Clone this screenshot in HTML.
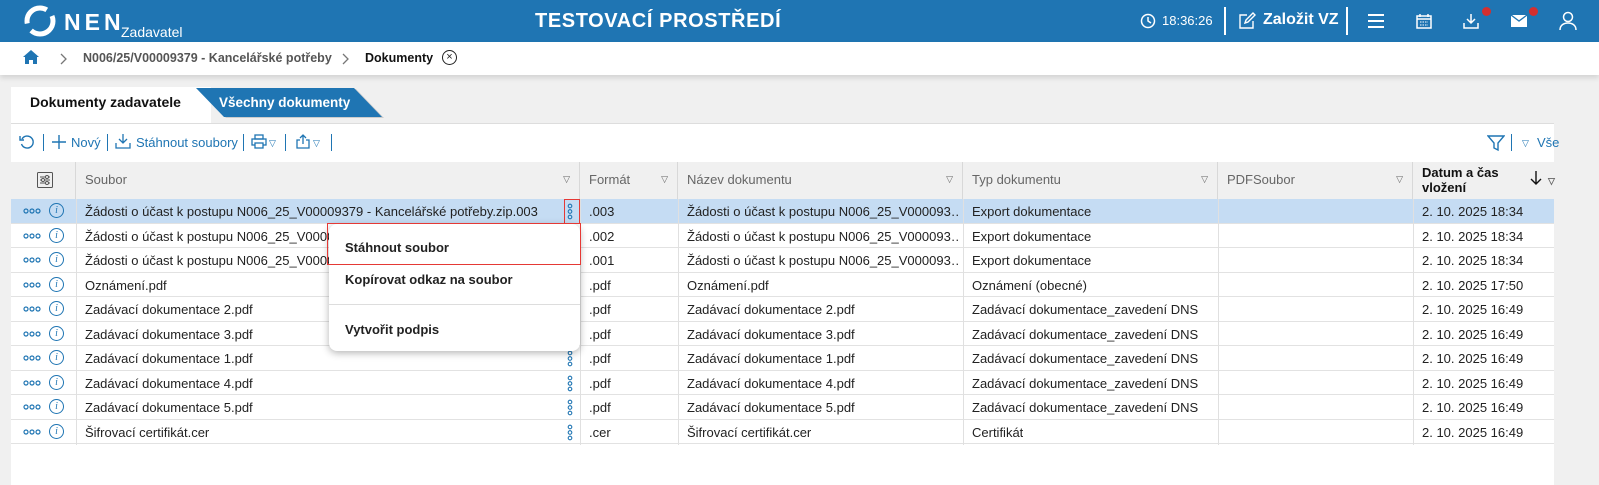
<!DOCTYPE html>
<html><head><meta charset="utf-8"><style>
*{box-sizing:border-box;margin:0;padding:0}
body{width:1599px;height:485px;overflow:hidden;background:#f0f0f0;font-family:"Liberation Sans",Arial,sans-serif;font-size:13px;color:#222;position:relative}
.hdr{position:absolute;left:0;top:0;width:1599px;height:42px;background:#1f75b3;color:#fff}
.abs{position:absolute}
.bc{position:absolute;left:0;top:42px;width:1599px;height:33px;background:#fff;box-shadow:0 3px 5px rgba(0,0,0,.12)}
.panel{position:absolute;left:11px;top:123px;width:1543px;height:362px;background:#fff;border-top:1px solid #ddd}
.th{position:absolute;top:162px;height:37px;background:#f0f0f0;border-right:1px solid #d8d8d8;color:#666;font-size:13px;padding:10px 9px}
.row{position:absolute;left:11px;width:1543px;height:24.5px;border-bottom:1px solid #e2e2e2;font-size:13px}
.row span{position:absolute;top:5px;white-space:nowrap;overflow:hidden}
.vl{position:absolute;top:162px;height:283px;width:1px;background:#e0e0e0}
.tri{position:absolute;font-size:9px;color:#666}
.dots{position:absolute;left:12px;top:9px}
.info{position:absolute;left:38px;top:4px;width:15px;height:15px;border:1.3px solid #1f75b3;border-radius:50%;color:#1f75b3;font-size:10px;text-align:center;line-height:13px;font-family:"Liberation Serif",serif;font-style:italic}
.kd{position:absolute;left:556px;top:4px}
</style></head><body>
<div class="hdr">
 <svg class="abs" style="left:24px;top:5px" width="32" height="32" viewBox="0 0 32 32"><circle cx="16" cy="16" r="13" fill="none" stroke="#fff" stroke-width="5" stroke-dasharray="30 8"/></svg>
 <div class="abs" style="left:64px;top:9px;font-size:23px;font-weight:bold;letter-spacing:4px">NEN</div>
 <div class="abs" style="left:121px;top:24px;font-size:14px">Zadavatel</div>
 <div class="abs" style="left:535px;top:10px;font-size:20px;font-weight:bold;letter-spacing:.6px">TESTOVACÍ PROSTŘEDÍ</div>
 <svg class="abs" style="left:1140px;top:13px" width="16" height="16"><circle cx="8" cy="8" r="6.5" fill="none" stroke="#fff" stroke-width="1.5"/><path d="M8 4v4l3 2" stroke="#fff" stroke-width="1.5" fill="none"/></svg>
 <div class="abs" style="left:1162px;top:13px;font-size:13px">18:36:26</div>
 <div class="abs" style="left:1224px;top:7px;width:2px;height:28px;background:#fff"></div>
 <svg class="abs" style="left:1238px;top:12px" width="18" height="18"><path d="M9 3H2v13h13V9M7 11l1-3 7-7 2 2-7 7z" stroke="#fff" stroke-width="1.4" fill="none"/></svg>
 <div class="abs" style="left:1263px;top:11px;font-size:16px;font-weight:bold">Založit VZ</div>
 <div class="abs" style="left:1346px;top:7px;width:2px;height:28px;background:#fff"></div>
 <div class="abs" style="left:1368px;top:14px;width:16px;height:2px;background:#fff;box-shadow:0 6px #fff,0 12px #fff"></div>
 <svg class="abs" style="left:1415px;top:12px" width="18" height="18"><rect x="2" y="4" width="14" height="12" fill="none" stroke="#fff" stroke-width="1.5"/><path d="M2 7h14M5 2v3M13 2v3" stroke="#fff" stroke-width="1.5"/><path d="M5 10h8M5 13h8" stroke="#fff" stroke-dasharray="1.5 1"/></svg>
 <svg class="abs" style="left:1462px;top:12px" width="18" height="18"><path d="M9 2v9M5 7l4 4 4-4M2 11v5h14v-5" stroke="#fff" stroke-width="1.5" fill="none"/></svg>
 <div class="abs" style="left:1482px;top:7px;width:9px;height:9px;border-radius:50%;background:#d32f2f"></div>
 <svg class="abs" style="left:1510px;top:14px" width="18" height="14"><rect x="1" y="1" width="16" height="12" fill="#fff"/><path d="M1 1l8 6 8-6" stroke="#1f75b3" stroke-width="1.3" fill="none"/></svg>
 <div class="abs" style="left:1529px;top:7px;width:9px;height:9px;border-radius:50%;background:#d32f2f"></div>
 <svg class="abs" style="left:1558px;top:11px" width="20" height="20"><circle cx="10" cy="6" r="4.5" fill="none" stroke="#fff" stroke-width="1.5"/><path d="M2 19c0-5 4-7 8-7s8 2 8 7" fill="none" stroke="#fff" stroke-width="1.5"/></svg>
</div>
<div class="bc">
 <svg class="abs" style="left:22px;top:7px" width="18" height="16"><path d="M9 1L1 8h2v7h4v-4h4v4h4V8h2z" fill="#1f75b3"/></svg>
 <svg class="abs" style="left:60px;top:11px" width="8" height="12"><path d="M1 1l5 5-5 5" stroke="#777" stroke-width="1.3" fill="none"/></svg>
 <div class="abs" style="left:83px;top:9px;color:#555;font-weight:bold;font-size:12.5px">N006/25/V00009379 - Kancelářské potřeby</div>
 <svg class="abs" style="left:342px;top:11px" width="8" height="12"><path d="M1 1l5 5-5 5" stroke="#777" stroke-width="1.3" fill="none"/></svg>
 <div class="abs" style="left:365px;top:9px;font-weight:bold;font-size:12.5px;color:#111">Dokumenty</div>
 <div class="abs" style="left:442px;top:8px;width:15px;height:15px;border:1.3px solid #222;border-radius:50%;font-size:11px;text-align:center;line-height:12px">×</div>
</div>
<div class="abs" style="left:11px;top:87px;width:200px;height:36px;background:#fff"></div>
<div class="abs" style="left:30px;top:94px;font-size:14px;font-weight:bold;color:#111">Dokumenty zadavatele</div>
<svg class="abs" style="left:196px;top:88px" width="190" height="30"><path d="M2 1H160L188 30H30z" fill="#ccc"/><path d="M0 0H158L186 29H28z" fill="#1f75b3"/></svg>
<div class="abs" style="left:219px;top:95px;font-size:13.5px;font-weight:bold;color:#fff">Všechny dokumenty</div>
<div class="panel"></div>
<svg class="abs" style="left:19px;top:134px" width="16" height="16"><path d="M3 5A6 6 0 1 1 2.5 10" stroke="#1f75b3" stroke-width="1.4" fill="none"/><path d="M1 2v4h4" stroke="#1f75b3" stroke-width="1.4" fill="none"/></svg>
<div class="abs" style="left:43px;top:134px;width:1px;height:17px;background:#1f75b3"></div>
<svg class="abs" style="left:52px;top:135px" width="14" height="14"><path d="M7 0v14M0 7h14" stroke="#1f75b3" stroke-width="1.4"/></svg>
<div class="abs" style="left:71px;top:135px;color:#1f75b3">Nový</div>
<div class="abs" style="left:107px;top:134px;width:1px;height:17px;background:#1f75b3"></div>
<svg class="abs" style="left:115px;top:133px" width="16" height="16"><path d="M8 1v9M4 6l4 4 4-4M1 10v5h14v-5" stroke="#1f75b3" stroke-width="1.3" fill="none"/></svg>
<div class="abs" style="left:136px;top:135px;color:#1f75b3">Stáhnout soubory</div>
<div class="abs" style="left:243px;top:134px;width:1px;height:17px;background:#1f75b3"></div>
<svg class="abs" style="left:251px;top:134px" width="16" height="15"><rect x="4" y="1" width="8" height="4" fill="none" stroke="#1f75b3" stroke-width="1.3"/><rect x="1" y="5" width="14" height="6" fill="none" stroke="#1f75b3" stroke-width="1.3"/><rect x="4" y="9" width="8" height="5" fill="#fff" stroke="#1f75b3" stroke-width="1.3"/></svg>
<div class="tri" style="left:269px;top:138px;color:#1f75b3">▽</div>
<div class="abs" style="left:285px;top:134px;width:1px;height:17px;background:#1f75b3"></div>
<svg class="abs" style="left:295px;top:133px" width="16" height="16"><path d="M8 11V2M5 5l3-3 3 3M5 7H2v8h12V7h-3" stroke="#1f75b3" stroke-width="1.3" fill="none"/></svg>
<div class="tri" style="left:313px;top:138px;color:#1f75b3">▽</div>
<div class="abs" style="left:331px;top:134px;width:1px;height:17px;background:#1f75b3"></div>
<svg class="abs" style="left:1487px;top:134px" width="18" height="18"><path d="M1 2h16l-6 7v7l-4-2V9z" stroke="#1f75b3" stroke-width="1.4" fill="none"/></svg>
<div class="abs" style="left:1511px;top:134px;width:1px;height:17px;background:#1f75b3"></div>
<div class="tri" style="left:1522px;top:138px;color:#1f75b3">▽</div>
<div class="abs" style="left:1537px;top:135px;color:#1f75b3">Vše</div>
<div class="th" style="left:11px;width:65px"></div>
<svg class="abs" style="left:37px;top:172px" width="16" height="16"><rect x=".5" y=".5" width="15" height="15" rx="1" fill="none" stroke="#555"/><path d="M3 5h10M3 8h10M3 11h10" stroke="#555"/><circle cx="10" cy="5" r="1.5" fill="#fff" stroke="#555"/><circle cx="6" cy="8" r="1.5" fill="#fff" stroke="#555"/><circle cx="10" cy="11" r="1.5" fill="#fff" stroke="#555"/></svg>
<div class="th" style="left:76px;width:504px">Soubor<span class="tri" style="right:9px;top:12px">▽</span></div>
<div class="th" style="left:580px;width:98px">Formát<span class="tri" style="right:9px;top:12px">▽</span></div>
<div class="th" style="left:678px;width:285px">Název dokumentu<span class="tri" style="right:9px;top:12px">▽</span></div>
<div class="th" style="left:963px;width:255px">Typ dokumentu<span class="tri" style="right:9px;top:12px">▽</span></div>
<div class="th" style="left:1218px;width:195px">PDFSoubor<span class="tri" style="right:9px;top:12px">▽</span></div>
<div class="th" style="left:1413px;width:141px;color:#111;font-weight:bold;padding:3px 9px;line-height:15px;border-right:none">Datum a čas<br>vložení<svg class="abs" style="left:117px;top:9px" width="12" height="14"><path d="M6 0v13M1 8l5 5 5-5" stroke="#111" stroke-width="1.4" fill="none"/></svg><span class="tri" style="left:135px;top:12px">▽</span></div>
<div id="rows"></div>
<div class="vl" style="left:76px;top:199px;height:246px"></div>
<div class="vl" style="left:580px;top:199px;height:246px"></div>
<div class="vl" style="left:678px;top:199px;height:246px"></div>
<div class="vl" style="left:963px;top:199px;height:246px"></div>
<div class="vl" style="left:1218px;top:199px;height:246px"></div>
<div class="vl" style="left:1413px;top:199px;height:246px"></div>
<div class="abs" style="left:564px;top:199px;width:16px;height:25px;border:1px solid #e53935"></div>
<div class="abs" style="left:329px;top:224px;width:251px;height:127px;background:#fff;border-radius:8px;box-shadow:0 2px 8px rgba(0,0,0,.3)">
 <div class="abs" style="left:16px;top:16px;font-weight:bold">Stáhnout soubor</div>
 <div class="abs" style="left:16px;top:48px;font-weight:bold">Kopírovat odkaz na soubor</div>
 <div class="abs" style="left:0;top:80px;width:251px;height:1px;background:#ddd"></div>
 <div class="abs" style="left:16px;top:98px;font-weight:bold">Vytvořit podpis</div>
</div>
<div class="abs" style="left:327px;top:223px;width:254px;height:42px;border:1px solid #e53935"></div>
<script>
var d=[["Žádosti o účast k postupu N006_25_V00009379 - Kancelářské potřeby.zip.003",".003","Žádosti o účast k postupu N006_25_V000093…","Export dokumentace","2. 10. 2025 18:34"],
["Žádosti o účast k postupu N006_25_V00009379 - Kancelářské potřeby.zip.002",".002","Žádosti o účast k postupu N006_25_V000093…","Export dokumentace","2. 10. 2025 18:34"],
["Žádosti o účast k postupu N006_25_V00009379 - Kancelářské potřeby.zip.001",".001","Žádosti o účast k postupu N006_25_V000093…","Export dokumentace","2. 10. 2025 18:34"],
["Oznámení.pdf",".pdf","Oznámení.pdf","Oznámení (obecné)","2. 10. 2025 17:50"],
["Zadávací dokumentace 2.pdf",".pdf","Zadávací dokumentace 2.pdf","Zadávací dokumentace_zavedení DNS","2. 10. 2025 16:49"],
["Zadávací dokumentace 3.pdf",".pdf","Zadávací dokumentace 3.pdf","Zadávací dokumentace_zavedení DNS","2. 10. 2025 16:49"],
["Zadávací dokumentace 1.pdf",".pdf","Zadávací dokumentace 1.pdf","Zadávací dokumentace_zavedení DNS","2. 10. 2025 16:49"],
["Zadávací dokumentace 4.pdf",".pdf","Zadávací dokumentace 4.pdf","Zadávací dokumentace_zavedení DNS","2. 10. 2025 16:49"],
["Zadávací dokumentace 5.pdf",".pdf","Zadávací dokumentace 5.pdf","Zadávací dokumentace_zavedení DNS","2. 10. 2025 16:49"],
["Šifrovací certifikát.cer",".cer","Šifrovací certifikát.cer","Certifikát","2. 10. 2025 16:49"]];
var dots='<svg class="dots" width="18" height="6"><circle cx="3" cy="3" r="2" fill="none" stroke="#1f75b3" stroke-width="1.2"/><circle cx="9" cy="3" r="2" fill="none" stroke="#1f75b3" stroke-width="1.2"/><circle cx="15" cy="3" r="2" fill="none" stroke="#1f75b3" stroke-width="1.2"/></svg>';
var kd='<svg class="kd" width="6" height="17"><circle cx="3" cy="3" r="1.8" fill="none" stroke="#1f75b3" stroke-width="1.1"/><circle cx="3" cy="8.5" r="1.8" fill="none" stroke="#1f75b3" stroke-width="1.1"/><circle cx="3" cy="14" r="1.8" fill="none" stroke="#1f75b3" stroke-width="1.1"/></svg>';
var h="";d.forEach(function(r,i){var t=199+i*24.5;
h+='<div class="row" style="top:'+t+'px;'+(i==0?'background:#c5dcf3':'')+'">'+dots+'<div class="info">i</div>'+
'<span style="left:74px;width:480px">'+r[0]+'</span>'+kd+'<span style="left:578px">'+r[1]+'</span><span style="left:676px;width:272px">'+r[2]+'</span><span style="left:961px">'+r[3]+'</span><span style="left:1411px">'+r[4]+'</span></div>';});
document.getElementById("rows").innerHTML=h;
</script>
</body></html>
